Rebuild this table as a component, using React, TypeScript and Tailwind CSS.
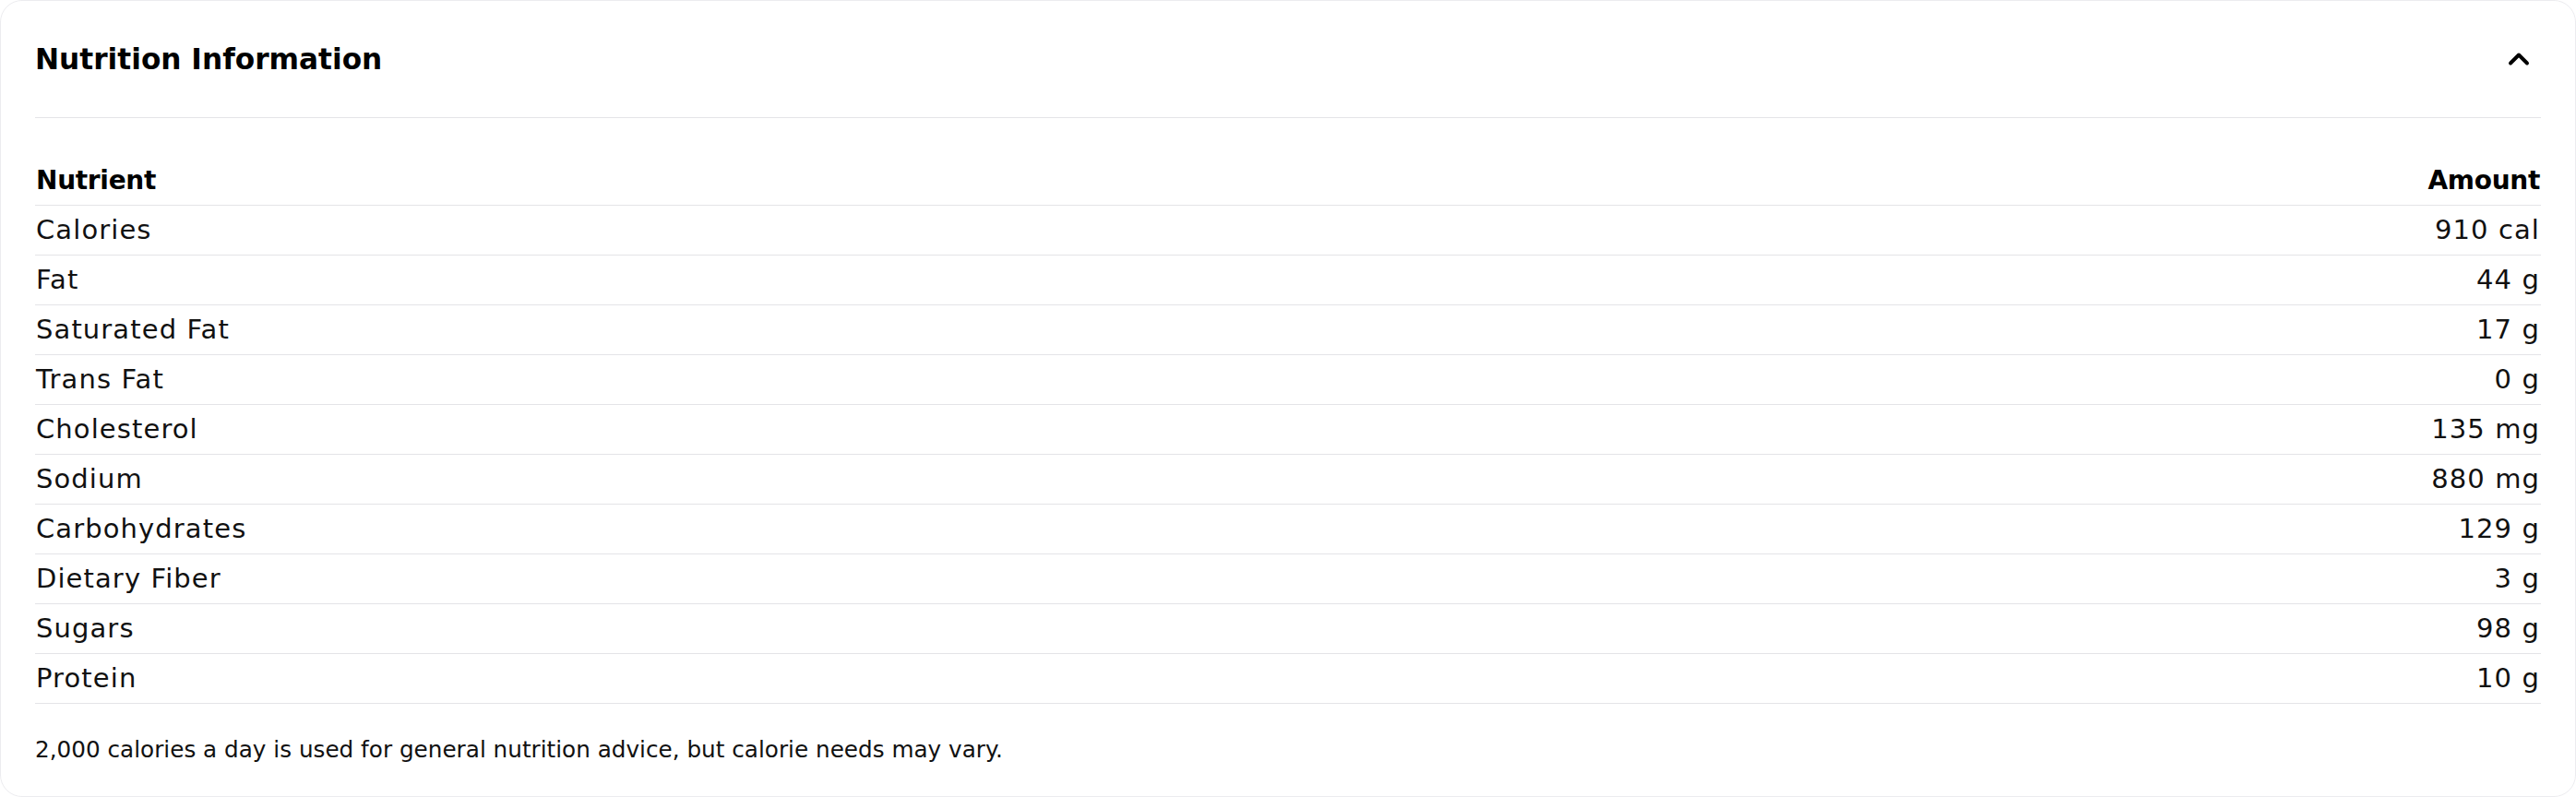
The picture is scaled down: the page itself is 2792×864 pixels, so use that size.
import { ChevronUp } from "lucide-react"

const nutrients = [
  { name: "Calories", amount: "910 cal" },
  { name: "Fat", amount: "44 g" },
  { name: "Saturated Fat", amount: "17 g" },
  { name: "Trans Fat", amount: "0 g" },
  { name: "Cholesterol", amount: "135 mg" },
  { name: "Sodium", amount: "880 mg" },
  { name: "Carbohydrates", amount: "129 g" },
  { name: "Dietary Fiber", amount: "3 g" },
  { name: "Sugars", amount: "98 g" },
  { name: "Protein", amount: "10 g" },
]

export default function App() {
  return (
    <div className="w-full h-[864px] bg-white font-['DejaVu_Sans',sans-serif] text-[#111]">
      <div className="h-full rounded-[24px] border border-[#ececef] px-[37px]">
        {/* header */}
        <div className="flex h-[127px] items-center justify-between border-b border-[#e4e4e7]">
          <h2 className="text-[31.2px] font-bold text-black">Nutrition Information</h2>
          <button className="mr-[6px] flex h-[36px] w-[36px] items-center justify-center text-black">
            <ChevronUp className="h-[36px] w-[36px]" strokeWidth={2.6} />
          </button>
        </div>

        {/* table */}
        <div className="pt-[41px]">
          <div className="flex h-[54px] items-center justify-between border-b border-[#e4e4e7] px-[1px] text-[28px] font-bold tracking-[-0.3px] text-black">
            <span>Nutrient</span>
            <span>Amount</span>
          </div>
          {nutrients.map((item) => (
            <div
              key={item.name}
              className="flex h-[54px] items-center justify-between border-b border-[#e4e4e7] px-[1px] text-[29px] tracking-[1.1px]"
            >
              <span>{item.name}</span>
              <span>{item.amount}</span>
            </div>
          ))}
        </div>

        <p className="mt-[32px] text-[24.7px] leading-[36px]">
          2,000 calories a day is used for general nutrition advice, but calorie needs may vary.
        </p>
      </div>
    </div>
  )
}
